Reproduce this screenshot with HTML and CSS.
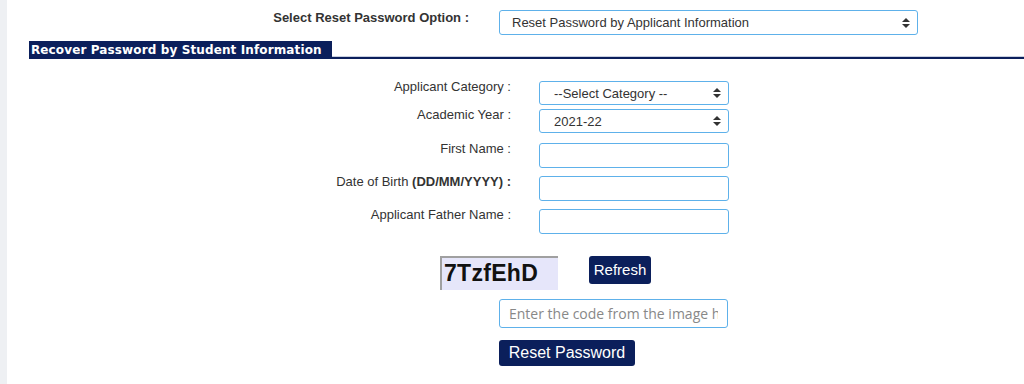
FILE: index.html
```html
<!DOCTYPE html>
<html>
<head>
<meta charset="utf-8">
<link rel="stylesheet" href="styles.css">
</head>
<body>
<div class="page">
  <div class="strip"></div>
  <div class="main">
    <div class="option-row">
      <label class="option-label">Select Reset Password Option :</label>
      <div class="sel sel-wide">
        <select><option>Reset Password by Applicant Information</option></select>
        <svg class="arrows" width="8" height="10" viewBox="0 0 8 10"><path d="M4 0L8 4H0Z M0 6H8L4 10Z" fill="#333"/></svg>
      </div>
    </div>
    <div class="section-head"><span class="section-title">Recover Password by Student Information</span></div>

    <div class="form">
      <div class="frow frow-sel">
        <label class="flabel">Applicant Category :</label>
        <div class="sel sel-narrow">
          <select><option>--Select Category --</option></select>
          <svg class="arrows" width="8" height="10" viewBox="0 0 8 10"><path d="M4 0L8 4H0Z M0 6H8L4 10Z" fill="#333"/></svg>
        </div>
      </div>
      <div class="frow frow-sel">
        <label class="flabel">Academic Year :</label>
        <div class="sel sel-narrow">
          <select><option>2021-22</option></select>
          <svg class="arrows" width="8" height="10" viewBox="0 0 8 10"><path d="M4 0L8 4H0Z M0 6H8L4 10Z" fill="#333"/></svg>
        </div>
      </div>
      <div class="frow frow-inp first">
        <label class="flabel">First Name :</label>
        <input class="txt" type="text">
      </div>
      <div class="frow frow-inp">
        <label class="flabel">Date of Birth <b>(DD/MM/YYYY) :</b></label>
        <input class="txt" type="text">
      </div>
      <div class="frow frow-inp">
        <label class="flabel">Applicant Father Name :</label>
        <input class="txt" type="text">
      </div>
    </div>

    <div class="captcha-row">
      <div class="captcha">7TzfEhD</div>
      <button class="btn btn-refresh">Refresh</button>
    </div>
    <div class="code-row">
      <input class="code" type="text" placeholder="Enter the code from the image here">
    </div>
    <div class="submit-row">
      <button class="btn btn-reset">Reset Password</button>
    </div>
  </div>
</div>
</body>
</html>
```

FILE: styles.css
```css
html, body {
  margin: 0;
  padding: 0;
  background: #fff;
  font-family: "Liberation Sans", Arial, sans-serif;
  color: #333;
}
.page {
  display: flex;
  width: 1024px;
  height: 384px;
  overflow: hidden;
}
.strip {
  width: 7px;
  flex: none;
  background: #eef0f3;
}
.main {
  flex: 1;
}
.option-row {
  display: flex;
  align-items: center;
  padding-top: 10px;
}
.option-label {
  width: 462px;
  text-align: right;
  font-weight: bold;
  font-size: 13px;
  color: #333;
  margin-top: -10px;
}
.sel {
  position: relative;
}
.sel select {
  appearance: none;
  -webkit-appearance: none;
  display: block;
  box-sizing: border-box;
  border: 1px solid #5eb1ea;
  border-radius: 3px;
  background: #fff;
  font-family: "Liberation Sans", Arial, sans-serif;
  color: #333;
  outline: none;
}
.sel .arrows {
  position: absolute;
  top: 50%;
  margin-top: -5px;
  right: 8px;
  pointer-events: none;
}
.sel-wide {
  margin-left: 30px;
}
.sel-wide select {
  width: 419px;
  height: 25px;
  font-size: 13px;
  padding: 0 0 0 12px;
}
.section-head {
  margin: 6px 0 0 22px;
  border-bottom: 2px solid #0b1f5b;
  box-shadow: 0 -1px 0 #c9d0e0 inset;
  height: 16px;
}
.section-title {
  display: inline-block;
  background: #0b1f5b;
  color: #fff;
  font-family: "DejaVu Sans", Verdana, sans-serif;
  font-weight: bold;
  font-size: 12px;
  line-height: 18px;
  height: 18px;
  padding: 0 10px 0 2px;
  letter-spacing: 0.12px;
  vertical-align: top;
}
.form {
  padding-top: 22px;
}
.frow {
  display: flex;
  align-items: flex-start;
}
.flabel {
  width: 504px;
  text-align: right;
  font-size: 13px;
  line-height: 14px;
  color: #333;
  margin-top: -1px;
}
.frow-sel {
  margin-bottom: 4px;
}
.frow-inp {
  margin-bottom: 8px;
}
.frow-inp.first {
  margin-top: 10px;
}
.sel-narrow {
  margin-left: 28px;
}
.sel-narrow select {
  width: 190px;
  height: 24px;
  font-size: 13px;
  padding: 0 0 0 14px;
}
.txt {
  display: block;
  box-sizing: border-box;
  margin: 0 0 0 28px;
  width: 190px;
  height: 25px;
  border: 1px solid #5eb1ea;
  border-radius: 3px;
  background: #fff;
  outline: none;
}
.captcha-row {
  display: flex;
  align-items: flex-start;
  margin-top: 22px;
  padding-left: 433px;
}
.captcha {
  box-sizing: border-box;
  width: 118px;
  height: 34px;
  background: #e6e6fa;
  border-top: 2px solid #a0a0a0;
  border-left: 2px solid #a0a0a0;
  font-family: "Liberation Sans", Arial, sans-serif;
  font-weight: bold;
  font-size: 23px;
  line-height: 30px;
  color: #111;
  padding-left: 2px;
  letter-spacing: 0.3px;
}
.btn {
  background: #0b1f5b;
  color: #fff;
  border: none;
  border-radius: 3px;
  font-family: "Liberation Sans", Arial, sans-serif;
  cursor: pointer;
  padding: 0;
}
.btn-refresh {
  margin-left: 31px;
  width: 62px;
  height: 28px;
  font-size: 15px;
  line-height: 26px;
}
.code-row {
  padding-left: 492px;
  margin-top: 9px;
}
.code {
  display: block;
  box-sizing: border-box;
  width: 229px;
  height: 29px;
  border: 1px solid #5eb1ea;
  border-radius: 3px;
  font-family: "Open Sans", sans-serif;
  font-size: 14px;
  padding: 0 9px;
  outline: none;
}
.code::placeholder {
  color: #888;
}
.submit-row {
  padding-left: 492px;
  margin-top: 12px;
}
.btn-reset {
  width: 136px;
  height: 26px;
  font-size: 16px;
  line-height: 26px;
}
```
